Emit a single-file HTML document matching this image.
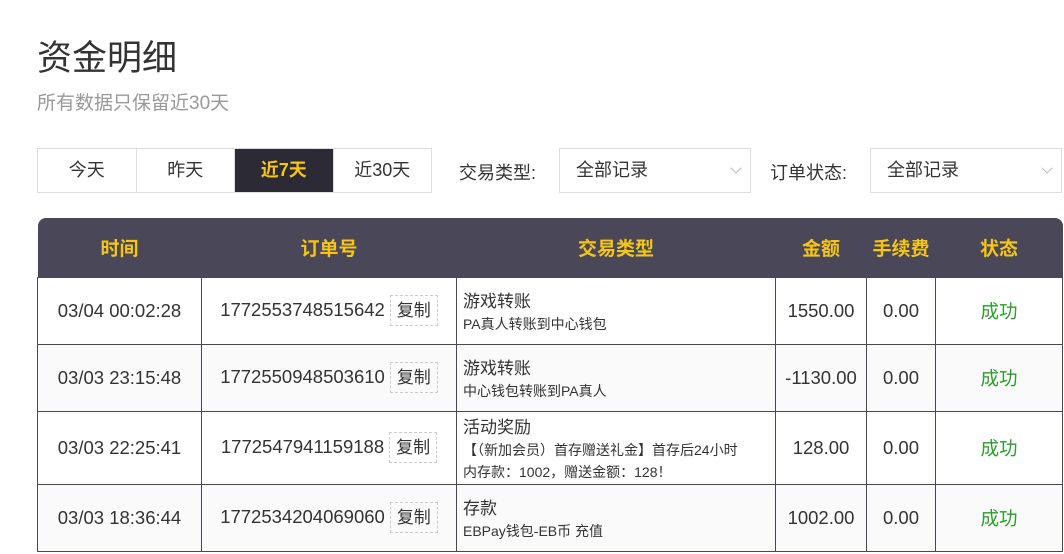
<!DOCTYPE html>
<html><head><meta charset="utf-8"><style>
*{margin:0;padding:0;box-sizing:border-box}
body{width:1064px;height:554px;background:#fff;font-family:"Liberation Sans","Noto Sans CJK SC",sans-serif;color:#333;position:relative;overflow:hidden}
.a{position:absolute}
h1{position:absolute;left:37px;top:30px;font-size:35px;font-weight:normal;color:#333}
.sub{left:37px;top:88px;font-size:19px;color:#999}
.tabs{left:37px;top:148px;width:395px;height:45px;border:1px solid #ddd;display:flex}
.tabs div{flex:1;text-align:center;line-height:43px;font-size:18px;border-right:1px solid #ddd;color:#333}
.tabs div:last-child{border-right:none}
.tabs .on{background:#2c2b35;color:#f5c518;font-weight:bold}
.lbl{font-size:18px;top:159px}
.sel{top:148px;height:45px;border:1px solid #ddd;font-size:18px;line-height:43px;padding-left:16px}
.sel:after{content:"";position:absolute;right:10px;top:15px;width:7px;height:7px;border-right:1px solid #bbb;border-bottom:1px solid #bbb;transform:rotate(45deg)}
table{position:absolute;left:37px;top:218px;width:1025px;border-collapse:collapse;table-layout:fixed}
th{background:#4a4858;color:#f5c518;font-size:19px;font-weight:bold;height:59px}
thead tr th:first-child{border-top-left-radius:8px}
thead tr th:last-child{border-top-right-radius:8px}
td{border:1px solid #4a4858;font-size:18.5px;text-align:center;color:#333;white-space:nowrap}
tbody tr:nth-child(even) td{background:#fafafa}
td.t{text-align:left;padding-left:6px;font-size:17px;white-space:normal}
td.t small{display:block;font-size:14px;line-height:22px;margin-top:1px}
.cp{display:inline-block;border:1px dashed #ccc;padding:0 6px;line-height:29px;margin-left:5px;font-size:17px}
.ok{color:#2a9d2a}
</style></head><body>
<h1>资金明细</h1>
<div class="a sub">所有数据只保留近30天</div>
<div class="a tabs"><div>今天</div><div>昨天</div><div class="on">近7天</div><div>近30天</div></div>
<div class="a lbl" style="left:459px">交易类型:</div>
<div class="a sel" style="left:559px;width:192px">全部记录</div>
<div class="a lbl" style="left:770px">订单状态:</div>
<div class="a sel" style="left:870px;width:192px">全部记录</div>
<table>
<colgroup><col style="width:164px"><col style="width:255px"><col style="width:319px"><col style="width:91px"><col style="width:69px"><col style="width:127px"></colgroup>
<thead><tr><th>时间</th><th>订单号</th><th>交易类型</th><th>金额</th><th>手续费</th><th>状态</th></tr></thead>
<tbody>
<tr style="height:67px"><td>03/04 00:02:28</td><td>1772553748515642<span class="cp">复制</span></td><td class="t">游戏转账<small>PA真人转账到中心钱包</small></td><td>1550.00</td><td>0.00</td><td class="ok">成功</td></tr>
<tr style="height:67px"><td>03/03 23:15:48</td><td>1772550948503610<span class="cp">复制</span></td><td class="t">游戏转账<small>中心钱包转账到PA真人</small></td><td>-1130.00</td><td>0.00</td><td class="ok">成功</td></tr>
<tr style="height:73px"><td>03/03 22:25:41</td><td>1772547941159188<span class="cp">复制</span></td><td class="t">活动奖励<small>【（新加会员）首存赠送礼金】首存后24小时<br>内存款：1002，赠送金额：128！</small></td><td>128.00</td><td>0.00</td><td class="ok">成功</td></tr>
<tr style="height:67px"><td>03/03 18:36:44</td><td>1772534204069060<span class="cp">复制</span></td><td class="t">存款<small>EBPay钱包-EB币 充值</small></td><td>1002.00</td><td>0.00</td><td class="ok">成功</td></tr>
</tbody></table>
</body></html>
